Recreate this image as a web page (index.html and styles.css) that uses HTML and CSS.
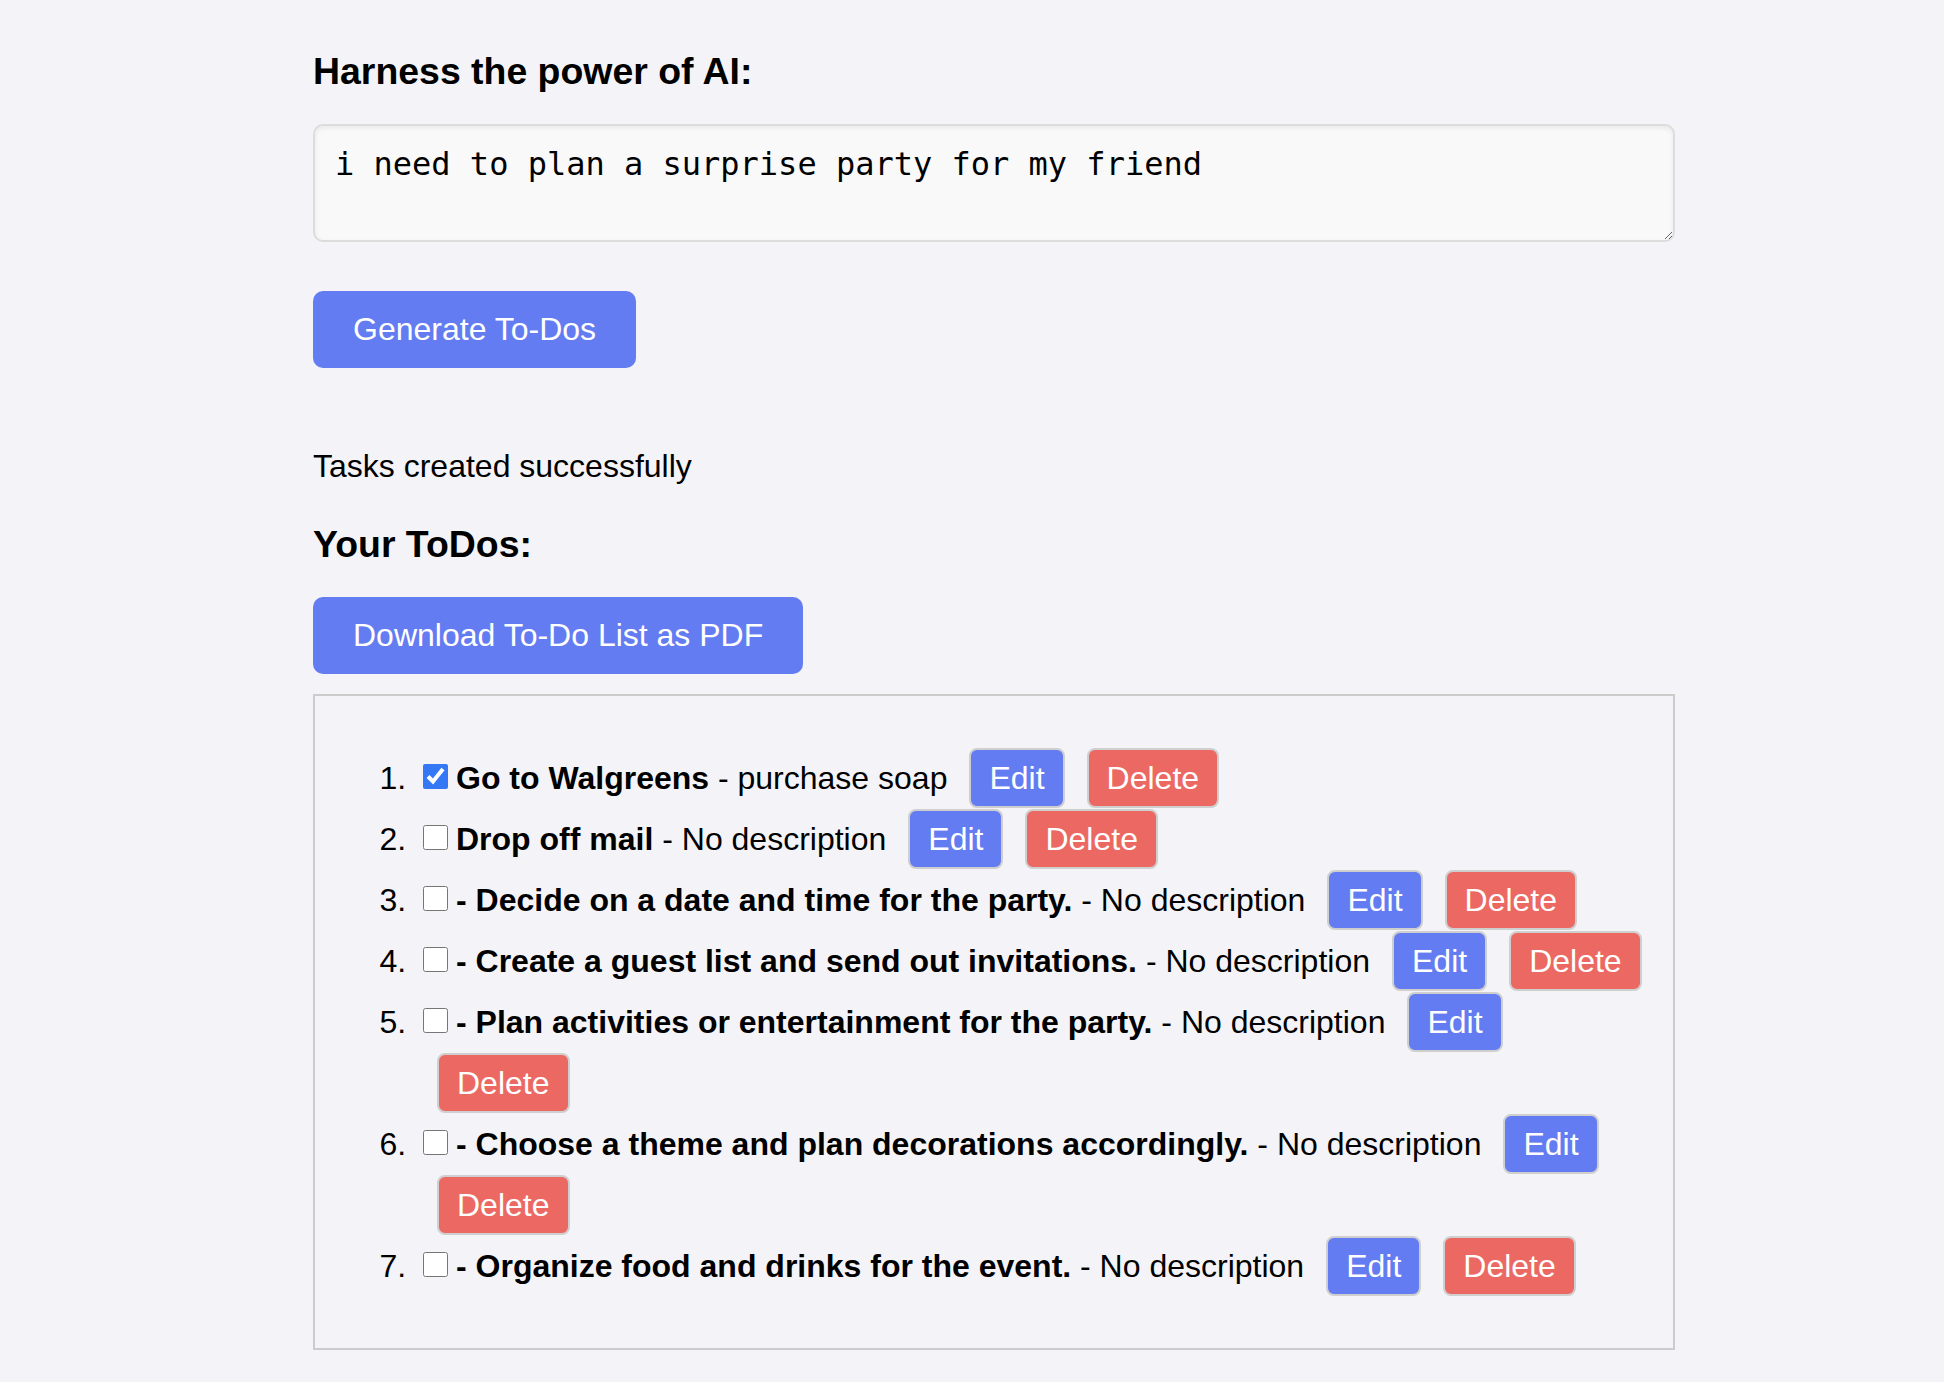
FILE: index.html
```html
<!DOCTYPE html>
<html lang="en">
<head>
<meta charset="utf-8">
<title>AI To-Do Generator</title>
<link rel="stylesheet" href="styles.css">
</head>
<body>
<main class="app">
  <h3 class="title">Harness the power of AI:</h3>
  <textarea class="prompt" rows="2">i need to plan a surprise party for my friend</textarea>
  <button class="primary generate">Generate To-Dos</button>
  <p class="status">Tasks created successfully</p>
  <h3 class="title todos-title">Your ToDos:</h3>
  <button class="primary download">Download To-Do List as PDF</button>
  <section class="todo-box">
    <ol class="todo-list">
      <li><input type="checkbox" checked><strong>Go to Walgreens</strong> - purchase soap<button class="btn edit">Edit</button><button class="btn del">Delete</button></li>
      <li><input type="checkbox"><strong>Drop off mail</strong> - No description<button class="btn edit">Edit</button><button class="btn del">Delete</button></li>
      <li><input type="checkbox"><strong>- Decide on a date and time for the party.</strong> - No description<button class="btn edit">Edit</button><button class="btn del">Delete</button></li>
      <li><input type="checkbox"><strong>- Create a guest list and send out invitations.</strong> - No description<button class="btn edit">Edit</button><button class="btn del">Delete</button></li>
      <li><input type="checkbox"><strong>- Plan activities or entertainment for the party.</strong> - No description<button class="btn edit">Edit</button><button class="btn del">Delete</button></li>
      <li><input type="checkbox"><strong>- Choose a theme and plan decorations accordingly.</strong> - No description<button class="btn edit">Edit</button><button class="btn del">Delete</button></li>
      <li><input type="checkbox"><strong>- Organize food and drinks for the event.</strong> - No description<button class="btn edit">Edit</button><button class="btn del">Delete</button></li>
    </ol>
  </section>
</main>
</body>
</html>
```

FILE: styles.css
```css
html, body {
  margin: 0;
  padding: 0;
  background: #f4f4f8;
}

body {
  font-family: "Liberation Sans", Arial, sans-serif;
  font-size: 32px;
  color: #000;
}

.app {
  width: 1362px;
  margin-left: 313px;
  padding-top: 50px;
  padding-bottom: 40px;
}

.title {
  font-size: 37.44px;
  font-weight: bold;
  margin: 0 0 31px;
  line-height: 43px;
}

.prompt {
  display: block;
  box-sizing: border-box;
  width: 100%;
  height: 118px;
  margin: 0;
  padding: 20px;
  border: 2px solid #dcdcdc;
  border-radius: 10px;
  background: #f9f9f9;
  box-shadow: inset 0 2px 5px rgba(0, 0, 0, 0.07);
  font-family: "DejaVu Sans Mono", monospace;
  font-size: 32px;
  line-height: 37px;
  color: #000;
}

.primary {
  display: block;
  border: none;
  border-radius: 10px;
  background: #647cf1;
  color: #fff;
  font-family: "Liberation Sans", Arial, sans-serif;
  font-size: 32px;
  line-height: 37px;
  padding: 20px 40px;
}

.generate {
  margin-top: 49px;
}

.status {
  margin: 80px 0 0;
  line-height: 37px;
}

.todos-title {
  margin-top: 38px;
  margin-bottom: 31px;
}

.todo-box {
  margin-top: 20px;
  border: 2px solid #cccccc;
  padding: 20px;
}

.todo-list {
  margin: 32px 0 31px;
  padding-left: 80px;
  line-height: 61px;
}

.todo-list input[type="checkbox"] {
  width: 25px;
  height: 25px;
  margin: 0 8px 0 8px;
  vertical-align: baseline;
  accent-color: #3478f6;
}

.btn {
  display: inline-block;
  vertical-align: baseline;
  margin-left: 22px;
  border: 2px solid #cfcfcf;
  border-radius: 8px;
  padding: 10px 18px;
  font-family: "Liberation Sans", Arial, sans-serif;
  font-size: 32px;
  line-height: 36px;
  color: #fff;
}

.edit {
  background: #647cf1;
}

.del {
  background: #ec6862;
}
```
